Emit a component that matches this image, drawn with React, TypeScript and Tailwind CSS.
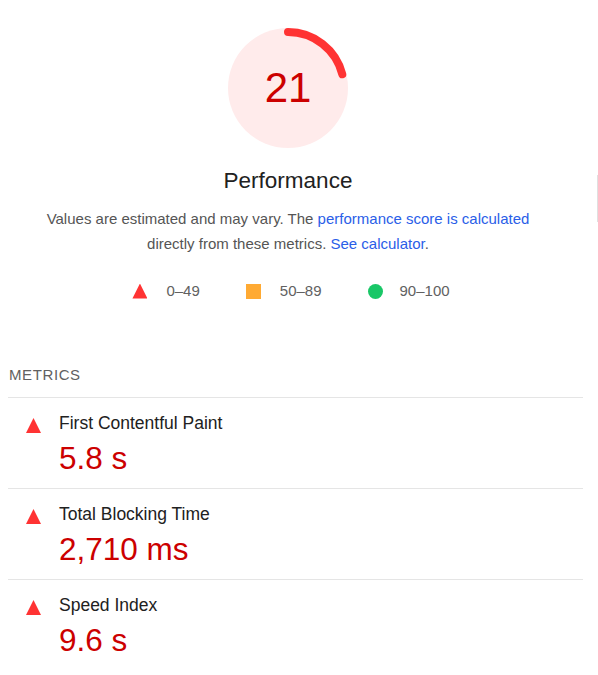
const metrics = [
  { title: 'First Contentful Paint', value: '5.8 s' },
  { title: 'Total Blocking Time', value: '2,710 ms' },
  { title: 'Speed Index', value: '9.6 s' },
];

function Triangle({ className = '' }: { className?: string }) {
  return (
    <span
      className={`inline-block w-[15px] h-[15px] bg-[#ff3333] [clip-path:polygon(50%_0%,100%_100%,0%_100%)] ${className}`}
    />
  );
}

function Gauge({ score }: { score: number }) {
  const r = 56;
  const c = 2 * Math.PI * r;
  return (
    <div className="relative w-[120px] h-[120px]">
      <svg width="120" height="120" viewBox="0 0 120 120">
        <circle cx="60" cy="60" r="60" fill="#ffebeb" />
        <circle
          cx="60"
          cy="60"
          r={r}
          fill="none"
          stroke="#ff3333"
          strokeWidth="8"
          strokeLinecap="round"
          strokeDasharray={`${(score / 100) * c} ${c}`}
          transform="rotate(-90 60 60)"
        />
      </svg>
      <div className="absolute inset-0 flex items-center justify-center text-[42px] text-[#cc0000] leading-none">
        {score}
      </div>
    </div>
  );
}

export default function App() {
  return (
    <div className="relative w-[598px] h-[675px] bg-white overflow-hidden font-['Liberation_Sans',Arial,sans-serif]">
      {/* Score header */}
      <div className="w-[576px] flex flex-col items-center pt-[28px]">
        <Gauge score={21} />
        <div className="mt-[19px] text-[22.5px] leading-[28px] text-[#212121]">Performance</div>
        <p className="mt-[11px] text-[15px] leading-[25px] text-[#555555] text-center">
          Values are estimated and may vary. The{' '}
          <a className="text-[#2a5ee8]">performance score is calculated</a>
          <br />
          directly from these metrics. <a className="text-[#2a5ee8]">See calculator</a>.
        </p>
        <div className="mt-[25px] ml-[6px] flex items-center gap-[46px] text-[15px] leading-[20px] text-[#616161]">
          <div className="flex items-center gap-[19px]">
            <Triangle />
            <span>0–49</span>
          </div>
          <div className="flex items-center gap-[19px]">
            <span className="inline-block w-[15px] h-[15px] bg-[#ffaa33]" />
            <span>50–89</span>
          </div>
          <div className="flex items-center gap-[17px]">
            <span className="inline-block w-[15px] h-[15px] rounded-full bg-[#19c767]" />
            <span>90–100</span>
          </div>
        </div>
      </div>

      {/* Metrics */}
      <div className="mt-[64px] ml-[8px] w-[575px]">
        <div className="pl-[1px] pb-[12px] text-[15px] leading-[20px] tracking-[0.6px] text-[#616161]">
          METRICS
        </div>
        {metrics.map((m) => (
          <div key={m.title} className="border-t border-[#e5e5e5] pt-[13px] pb-[12px] flex">
            <div className="w-[51px] pl-[18px] pt-[5px]">
              <Triangle />
            </div>
            <div className="flex flex-col">
              <div className="text-[17.5px] leading-[24px] text-[#212121]">{m.title}</div>
              <div className="mt-[5px] text-[31.5px] leading-[36px] text-[#cc0000]">{m.value}</div>
            </div>
          </div>
        ))}
      </div>

      <div className="absolute right-0 top-[175px] w-px h-[47px] bg-[#e0e0e0]" />
    </div>
  );
}
